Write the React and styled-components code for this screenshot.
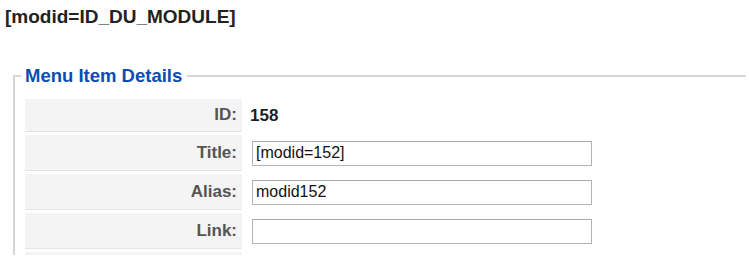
import { Fragment } from 'react';
import styled, { createGlobalStyle } from 'styled-components';

const GlobalStyle = createGlobalStyle`
  html, body {
    margin: 0;
    padding: 0;
    background: #ffffff;
  }
  body {
    font-family: 'Liberation Sans', Arial, sans-serif;
  }
`;

const Frame = styled('div')`
  width: 749px;
  height: 255px;
  overflow: hidden;
  background: #ffffff;
`;

const Heading = styled('div')`
  margin: 6px 0 0 5px;
  font-size: 19px;
  line-height: 22px;
  font-weight: bold;
  color: #222222;
`;

const Fieldset = styled('fieldset')`
  margin: 38px 3px 0 13px;
  padding: 13px 0 10px 10px;
  border: 2px solid #d6d6d6;
  border-right: none;
  min-width: 0;
`;

const Legend = styled('legend')`
  margin-left: -4px;
  padding: 0 5px 0 4px;
  font-size: 18.5px;
  line-height: 20px;
  font-weight: bold;
  color: #0a4db3;
`;

const Grid = styled('div')`
  display: grid;
  grid-template-columns: 217px 1fr;
  grid-auto-rows: 36px;
  grid-template-rows: 33px;
  row-gap: 3px;
  column-gap: 8px;
`;

const Key = styled('div')`
  display: flex;
  align-items: center;
  justify-content: flex-end;
  padding-right: 5px;
  background: #f4f4f4;
  border-bottom: 1px solid #e4e4e4;
  font-size: 17px;
  font-weight: bold;
  color: #555555;
`;

const Value = styled('div')`
  display: flex;
  align-items: center;
  font-size: 17px;
  font-weight: ${(props) => (props.bold ? 'bold' : 'normal')};
  color: #1e1e1e;
`;

const Input = styled('input')`
  box-sizing: border-box;
  margin: 0 0 0 2px;
  width: 340px;
  height: 25px;
  padding: 0 3px;
  border: 1px solid #b4b4b4;
  border-top-color: #a8a8a8;
  background: #ffffff;
  font-family: 'Liberation Sans', Arial, sans-serif;
  font-size: 16px;
  color: #111111;
  outline: none;
`;

const rows = [
  { id: 'id', key: 'ID:', text: '158' },
  { id: 'title', key: 'Title:', input: '[modid=152]' },
  { id: 'alias', key: 'Alias:', input: 'modid152' },
  { id: 'link', key: 'Link:', input: '' },
  { id: 'next', key: '', input: null },
];

export default function App() {
  return (
    <Frame>
      <GlobalStyle />
      <Heading>[modid=ID_DU_MODULE]</Heading>
      <Fieldset>
        <Legend>Menu Item Details</Legend>
        <Grid>
          {rows.map((row) => (
            <Fragment key={row.id}>
              <Key>{row.key}</Key>
              <Value bold={row.text !== undefined}>
                {row.text !== undefined && row.text}
                {typeof row.input === 'string' && (
                  <Input defaultValue={row.input} />
                )}
              </Value>
            </Fragment>
          ))}
        </Grid>
      </Fieldset>
    </Frame>
  );
}
